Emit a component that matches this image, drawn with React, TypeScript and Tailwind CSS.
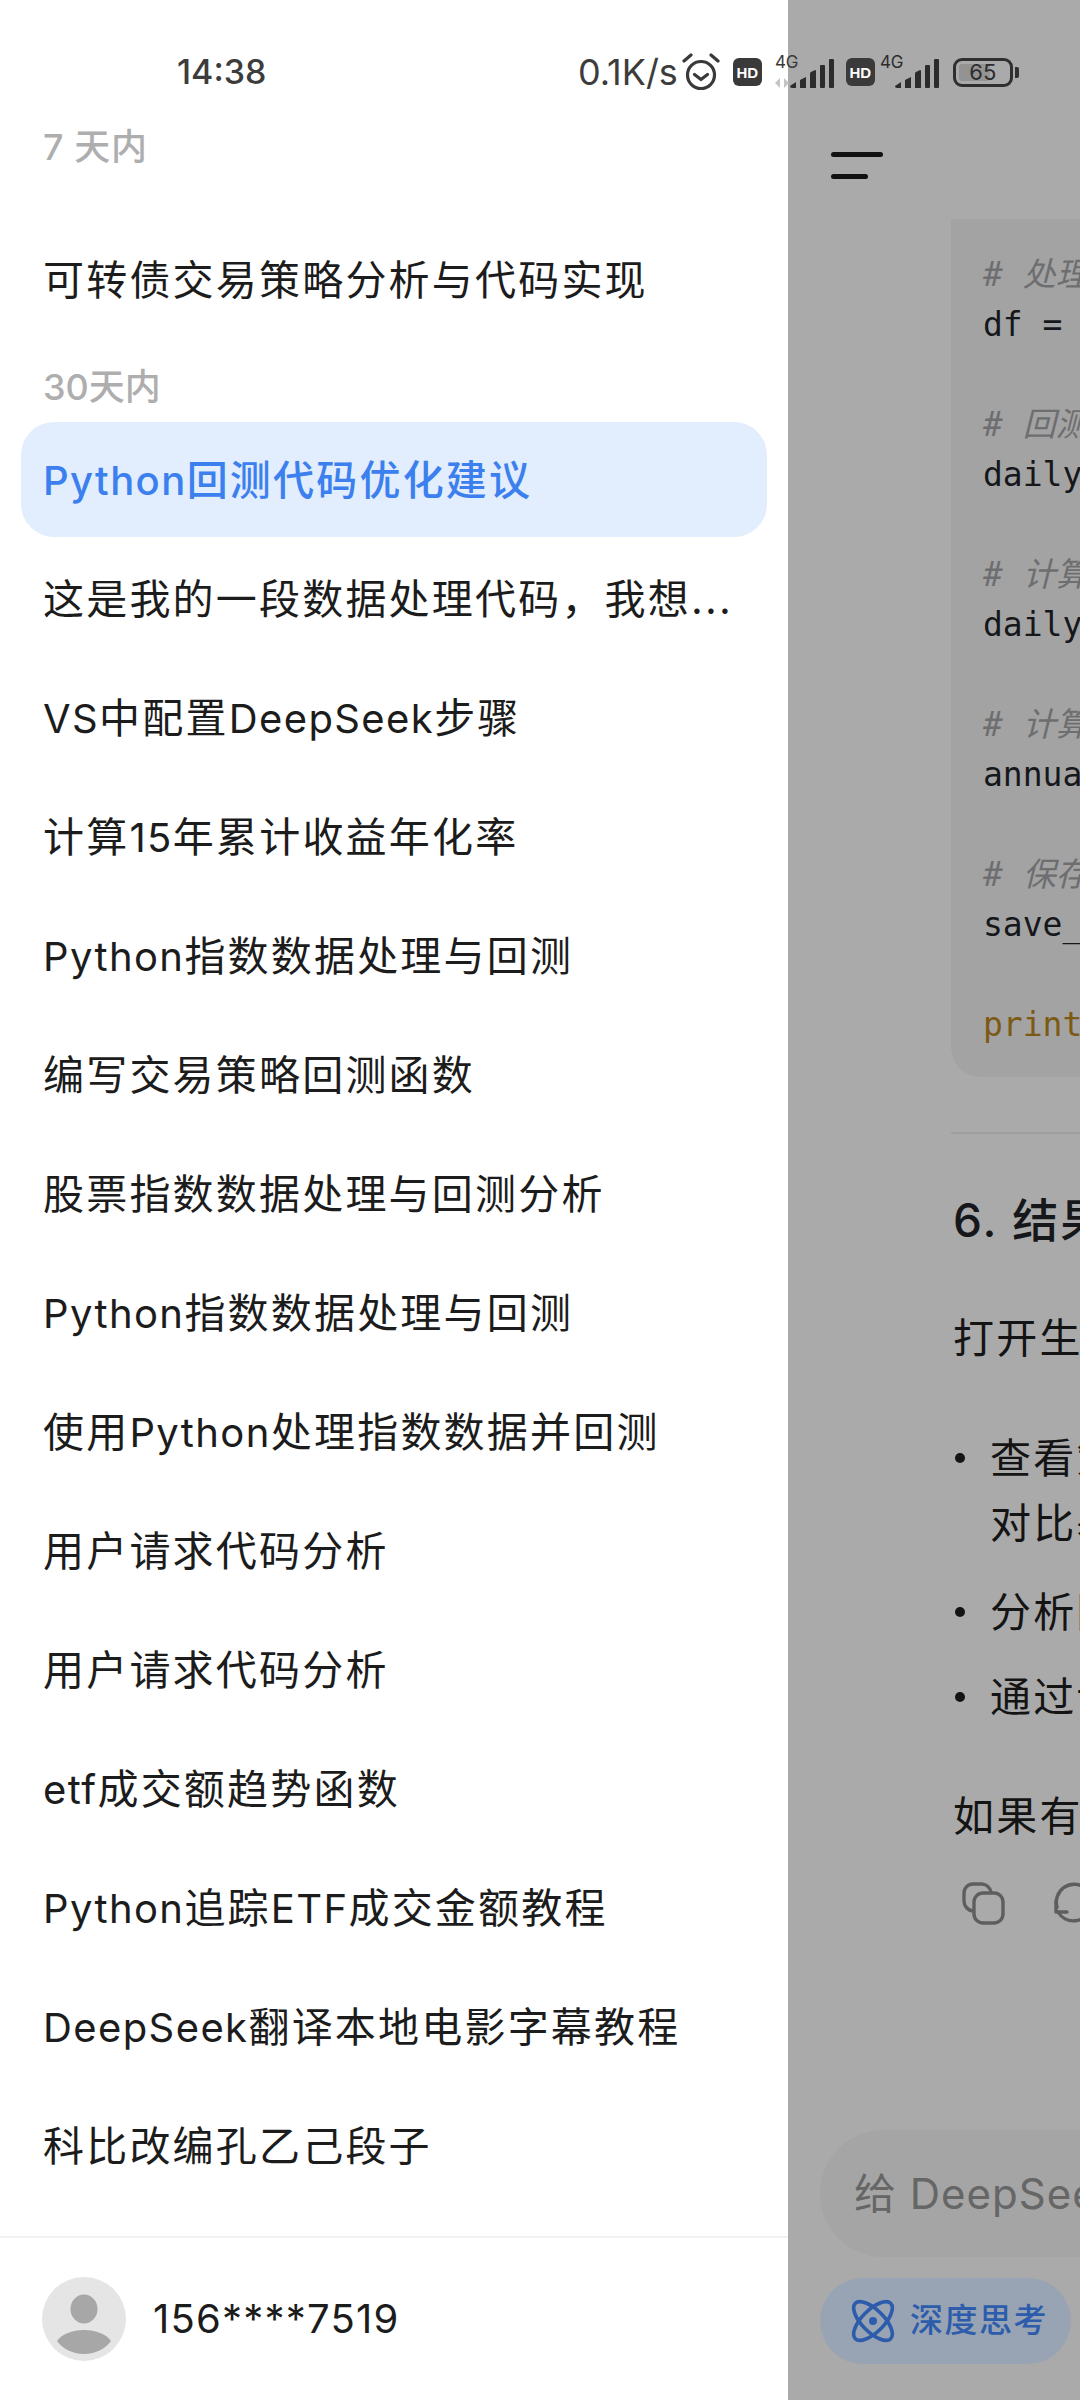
const sans = "font-['Inter','Noto_Sans_CJK_SC',sans-serif]";

const recent = ["可转债交易策略分析与代码实现"];
const month = [
  "这是我的一段数据处理代码，我想...",
  "VS中配置DeepSeek步骤",
  "计算15年累计收益年化率",
  "Python指数数据处理与回测",
  "编写交易策略回测函数",
  "股票指数数据处理与回测分析",
  "Python指数数据处理与回测",
  "使用Python处理指数数据并回测",
  "用户请求代码分析",
  "用户请求代码分析",
  "etf成交额趋势函数",
  "Python追踪ETF成交金额教程",
  "DeepSeek翻译本地电影字幕教程",
  "科比改编孔乙己段子",
];

const code: [string, string][] = [
  ["c", "# 处理数据"],
  ["t", "df = process_data(df)"],
  ["t", " "],
  ["c", "# 回测策略"],
  ["t", "daily_returns = backtest(df)"],
  ["t", " "],
  ["c", "# 计算累计收益"],
  ["t", "daily_returns['cum'] = 1"],
  ["t", " "],
  ["c", "# 计算年化收益"],
  ["t", "annual_returns = calc(df)"],
  ["t", " "],
  ["c", "# 保存结果"],
  ["t", "save_results(df)"],
  ["t", " "],
  ["p", "print('done')"],
];

function Mixed({ text }: { text: string }) {
  const runs = text.split(/([A-Za-z0-9]+)/).filter(Boolean);
  return (
    <>
      {runs.map((r, i) =>
        /^[A-Za-z0-9]+$/.test(r) ? (
          <span key={i} className="text-[40px] tracking-[1.4px]">{r}</span>
        ) : (
          <span key={i} className="text-[41px] tracking-[2.2px]">{r}</span>
        ),
      )}
    </>
  );
}

function Row({ text }: { text: string }) {
  return (
    <div className="flex h-[119px] items-center whitespace-nowrap pl-[43px] pt-[2px] text-[#1c1c1c]">
      <div><Mixed text={text} /></div>
    </div>
  );
}

function Signal() {
  return (
    <svg width="44" height="30" viewBox="0 0 44 30" fill="#2c2c2c">
      <path d="M0 28l6-4v6H2a2 2 0 0 1-2-2z" />
      <path d="M10 22l6-3v11h-6z" />
      <path d="M20 16a2 2 0 0 1 1-2l4-2a1 1 0 0 1 1 1v17h-6z" />
      <rect x="30" y="7" width="5" height="23" rx="1" />
      <rect x="39" y="1" width="5" height="29" rx="1" />
    </svg>
  );
}

function HD() {
  return (
    <div className="flex h-[28px] w-[29px] items-center justify-center rounded-[6px] bg-[#3a3a3a] font-['Liberation_Sans',sans-serif] text-[15px] font-bold leading-none text-white">
      HD
    </div>
  );
}

function StatusBar() {
  return (
    <div className={`absolute left-0 right-0 top-0 flex h-[144px] items-center text-[#3c3c3c] ${sans}`}>
      <div className="ml-[177px] w-[401px] text-[34px] font-medium leading-none">14:38</div>
      <div className="text-[36px] leading-none">0.1K/s</div>
      <svg className="ml-[4px]" width="38" height="38" viewBox="0 0 38 38" fill="none" stroke="#3a3a3a">
        <circle cx="19" cy="22" r="13.5" strokeWidth="3.2" />
        <path d="M12.5 21.5l6.5 5 6.5-5" strokeWidth="3.2" strokeLinecap="round" strokeLinejoin="round" />
        <path d="M2 8l7-6M36 8l-7-6" strokeWidth="3.2" strokeLinecap="round" />
      </svg>
      <div className="ml-[13px]"><HD /></div>
      <div className="relative ml-[13px] h-[34px] w-[59px]">
        <span className="absolute left-0 top-[-3px] text-[17px] leading-[20px] text-[#3a3a3a]">4G</span>
        <svg className="absolute bottom-[1px] left-0" width="14" height="10" viewBox="0 0 14 10" fill="#c4c4c4">
          <path d="M5 0v10L0 5zM9 0l5 5-5 5z" />
        </svg>
        <div className="absolute bottom-[1px] right-0"><Signal /></div>
      </div>
      <div className="ml-[12px]"><HD /></div>
      <div className="relative ml-[5px] h-[34px] w-[59px]">
        <span className="absolute left-0 top-[-3px] text-[17px] leading-[20px] text-[#2c2c2c]">4G</span>
        <div className="absolute bottom-[1px] right-0"><Signal /></div>
      </div>
      <div className="relative ml-[14px] flex h-[29px] w-[60px] items-center justify-center rounded-[9px] border-[3px] border-[#2f2f2f]">
        <div className="absolute bottom-[3px] left-[3px] top-[3px] w-[31px] rounded-[3px] bg-[#939393]" />
        <span className="relative text-[22px] leading-none text-[#2c2c2c]">65</span>
      </div>
      <div className="ml-[2px] h-[11px] w-[4px] rounded-r-[2px] bg-[#2f2f2f]" />
    </div>
  );
}

function Sidebar() {
  return (
    <aside className={`flex h-full w-[788px] shrink-0 flex-col bg-white ${sans}`}>
      <div className="flex-1 overflow-hidden">
        <div className="flex h-[184px] flex-col justify-end pb-[14px] pl-[43px]">
          <div className="text-[36px] font-medium leading-[46px] tracking-[0.6px] text-[#aeaeae]">7 天内</div>
        </div>
        <div className="mb-[34px] h-[2px] overflow-hidden pl-[43px]">
          <div className="mt-[-45px] h-[53px] whitespace-nowrap text-[40px] leading-[53px] tracking-[2.4px] text-[#b5b5b5]">
            可转债交易&nbsp;&nbsp;&nbsp;&nbsp;&nbsp;&nbsp;&nbsp;策略回测分析
          </div>
        </div>
        {recent.map((t) => (
          <Row key={t} text={t} />
        ))}
        <div className="flex h-[81px] items-start pl-[43px] pt-[25px]">
          <div className="text-[36px] font-medium leading-[46px] text-[#aeaeae]">30天内</div>
        </div>
        <div className="mx-[21px] mb-[2px] mt-[2px] flex h-[115px] items-center whitespace-nowrap rounded-[33px] bg-[#e2edfd] pl-[22px] pt-[2px] font-medium text-[#3b80ee]">
          <div><Mixed text="Python回测代码优化建议" /></div>
        </div>
        {month.map((t, i) => (
          <Row key={i} text={t} />
        ))}
      </div>
      <div className="flex h-[164px] shrink-0 items-center border-t-2 border-[#f1f1f1] pl-[42px]">
        <svg width="84" height="84" viewBox="0 0 84 84">
          <circle cx="42" cy="42" r="42" fill="#e5e5e5" />
          <ellipse cx="42" cy="32" rx="13.5" ry="14.5" fill="#a7a7a7" />
          <path d="M15 64c5-7 15-11 27-11s22 4 27 11c-5 7-15 13-27 13S20 71 15 64z" fill="#a7a7a7" />
        </svg>
        <div className="ml-[27px] text-[40px] tracking-[1.2px] text-[#1c1c1c]">156****7519</div>
      </div>
    </aside>
  );
}

function Bullet({ lines, className }: { lines: string[]; className: string }) {
  const para = "whitespace-nowrap text-[41px] leading-[48px] tracking-[2.2px] text-[#141414]";
  return (
    <div className={`relative pl-[39px] ${className}`}>
      <div className="absolute left-[4px] top-[19px] h-[10px] w-[10px] rounded-full bg-[#141414]" />
      <div className={para}>{lines[0]}</div>
      {lines[1] ? <div className={`mt-[17px] ${para}`}>{lines[1]}</div> : null}
    </div>
  );
}

function Panel() {
  const para = "whitespace-nowrap text-[41px] leading-[48px] tracking-[2.2px] text-[#141414]";
  return (
    <main className={`flex h-full min-w-0 flex-1 flex-col overflow-hidden bg-[#aaaaaa] ${sans}`}>
      <div className="pl-[43px] pt-[152px]">
        <div className="h-[5px] w-[52px] rounded-full bg-[#111]" />
        <div className="mt-[17px] h-[5px] w-[37px] rounded-full bg-[#111]" />
      </div>
      <div className="ml-[163px] w-[400px] shrink-0">
        <div className="mt-[40px] rounded-b-[30px] bg-[#a3a3a3] pb-[27px] pl-[32px] pt-[31px] font-['DejaVu_Sans_Mono','Noto_Sans_CJK_SC',monospace] text-[33px] leading-[50px]">
          {code.map(([k, l], i) => (
            <div
              key={i}
              className={
                k === "c"
                  ? "h-[50px] whitespace-pre italic text-[#6d6e70]"
                  : k === "p"
                    ? "h-[50px] whitespace-pre text-[#7c5a14]"
                    : "h-[50px] whitespace-pre text-[#15171b]"
              }
            >
              {l}
            </div>
          ))}
        </div>
        <div className="mt-[55px] h-[2px] bg-[#9e9e9e]" />
        <div className="mt-[58px] whitespace-nowrap pl-[2px] text-[46px] font-medium leading-[56px] tracking-[2px] text-[#15171b]">6. 结果分析</div>
        <div className={`mt-[66px] pl-[2px] ${para}`}>打开生成的图表</div>
        <Bullet className="mt-[72px]" lines={["查看策略表现", "对比基准收益"]} />
        <Bullet className="mt-[41px]" lines={["分析回撤情况"]} />
        <Bullet className="mt-[37px]" lines={["通过调整参数"]} />
        <div className={`mt-[71px] pl-[2px] ${para}`}>如果有问题</div>
        <div className="mt-[41px] flex items-center gap-[47px] pl-[10px]">
          <svg width="44" height="44" viewBox="0 0 44 44" fill="none" stroke="#5e5e5e" strokeWidth="3.4">
            <path d="M12 30a10 10 0 0 1-9-10V12a9 9 0 0 1 9-9h9a10 10 0 0 1 9 8" strokeLinecap="round" />
            <rect x="13" y="12" width="29" height="30" rx="9" />
          </svg>
          <svg width="44" height="44" viewBox="0 0 44 44" fill="none" stroke="#5e5e5e" strokeWidth="3.4" strokeLinecap="round" strokeLinejoin="round">
            <path d="M32 6A18 18 0 0 0 5 26" />
            <path d="M4 20v11h11" />
            <path d="M6 31a18 18 0 0 0 32-2" />
          </svg>
        </div>
      </div>
      <div className="flex-1" />
      <div className="ml-[32px] flex h-[127px] w-[500px] shrink-0 items-center rounded-[64px] bg-[#a5a5a5] pl-[34px] text-[42px] tracking-[1px] text-[#666]">
        <span className="whitespace-nowrap">给 DeepSeek 发送消息</span>
      </div>
      <div className="mb-[36px] ml-[32px] mt-[21px] flex h-[86px] w-[251px] shrink-0 items-center rounded-[43px] bg-[#98a4b3] pl-[30px]">
        <svg width="46" height="46" viewBox="0 0 46 46" fill="none" stroke="#2c5cab" strokeWidth="3.6">
          <ellipse cx="23" cy="23" rx="25" ry="11" transform="rotate(45 23 23)" />
          <ellipse cx="23" cy="23" rx="25" ry="11" transform="rotate(-45 23 23)" />
          <circle cx="23" cy="23" r="4" fill="#2c5cab" stroke="none" />
        </svg>
        <span className="ml-[14px] whitespace-nowrap text-[33px] font-medium tracking-[1.5px] text-[#2c5cab]">深度思考</span>
      </div>
    </main>
  );
}

export default function App() {
  return (
    <div className="relative flex h-[2400px] w-[1080px] overflow-hidden">
      <Sidebar />
      <Panel />
      <StatusBar />
    </div>
  );
}
